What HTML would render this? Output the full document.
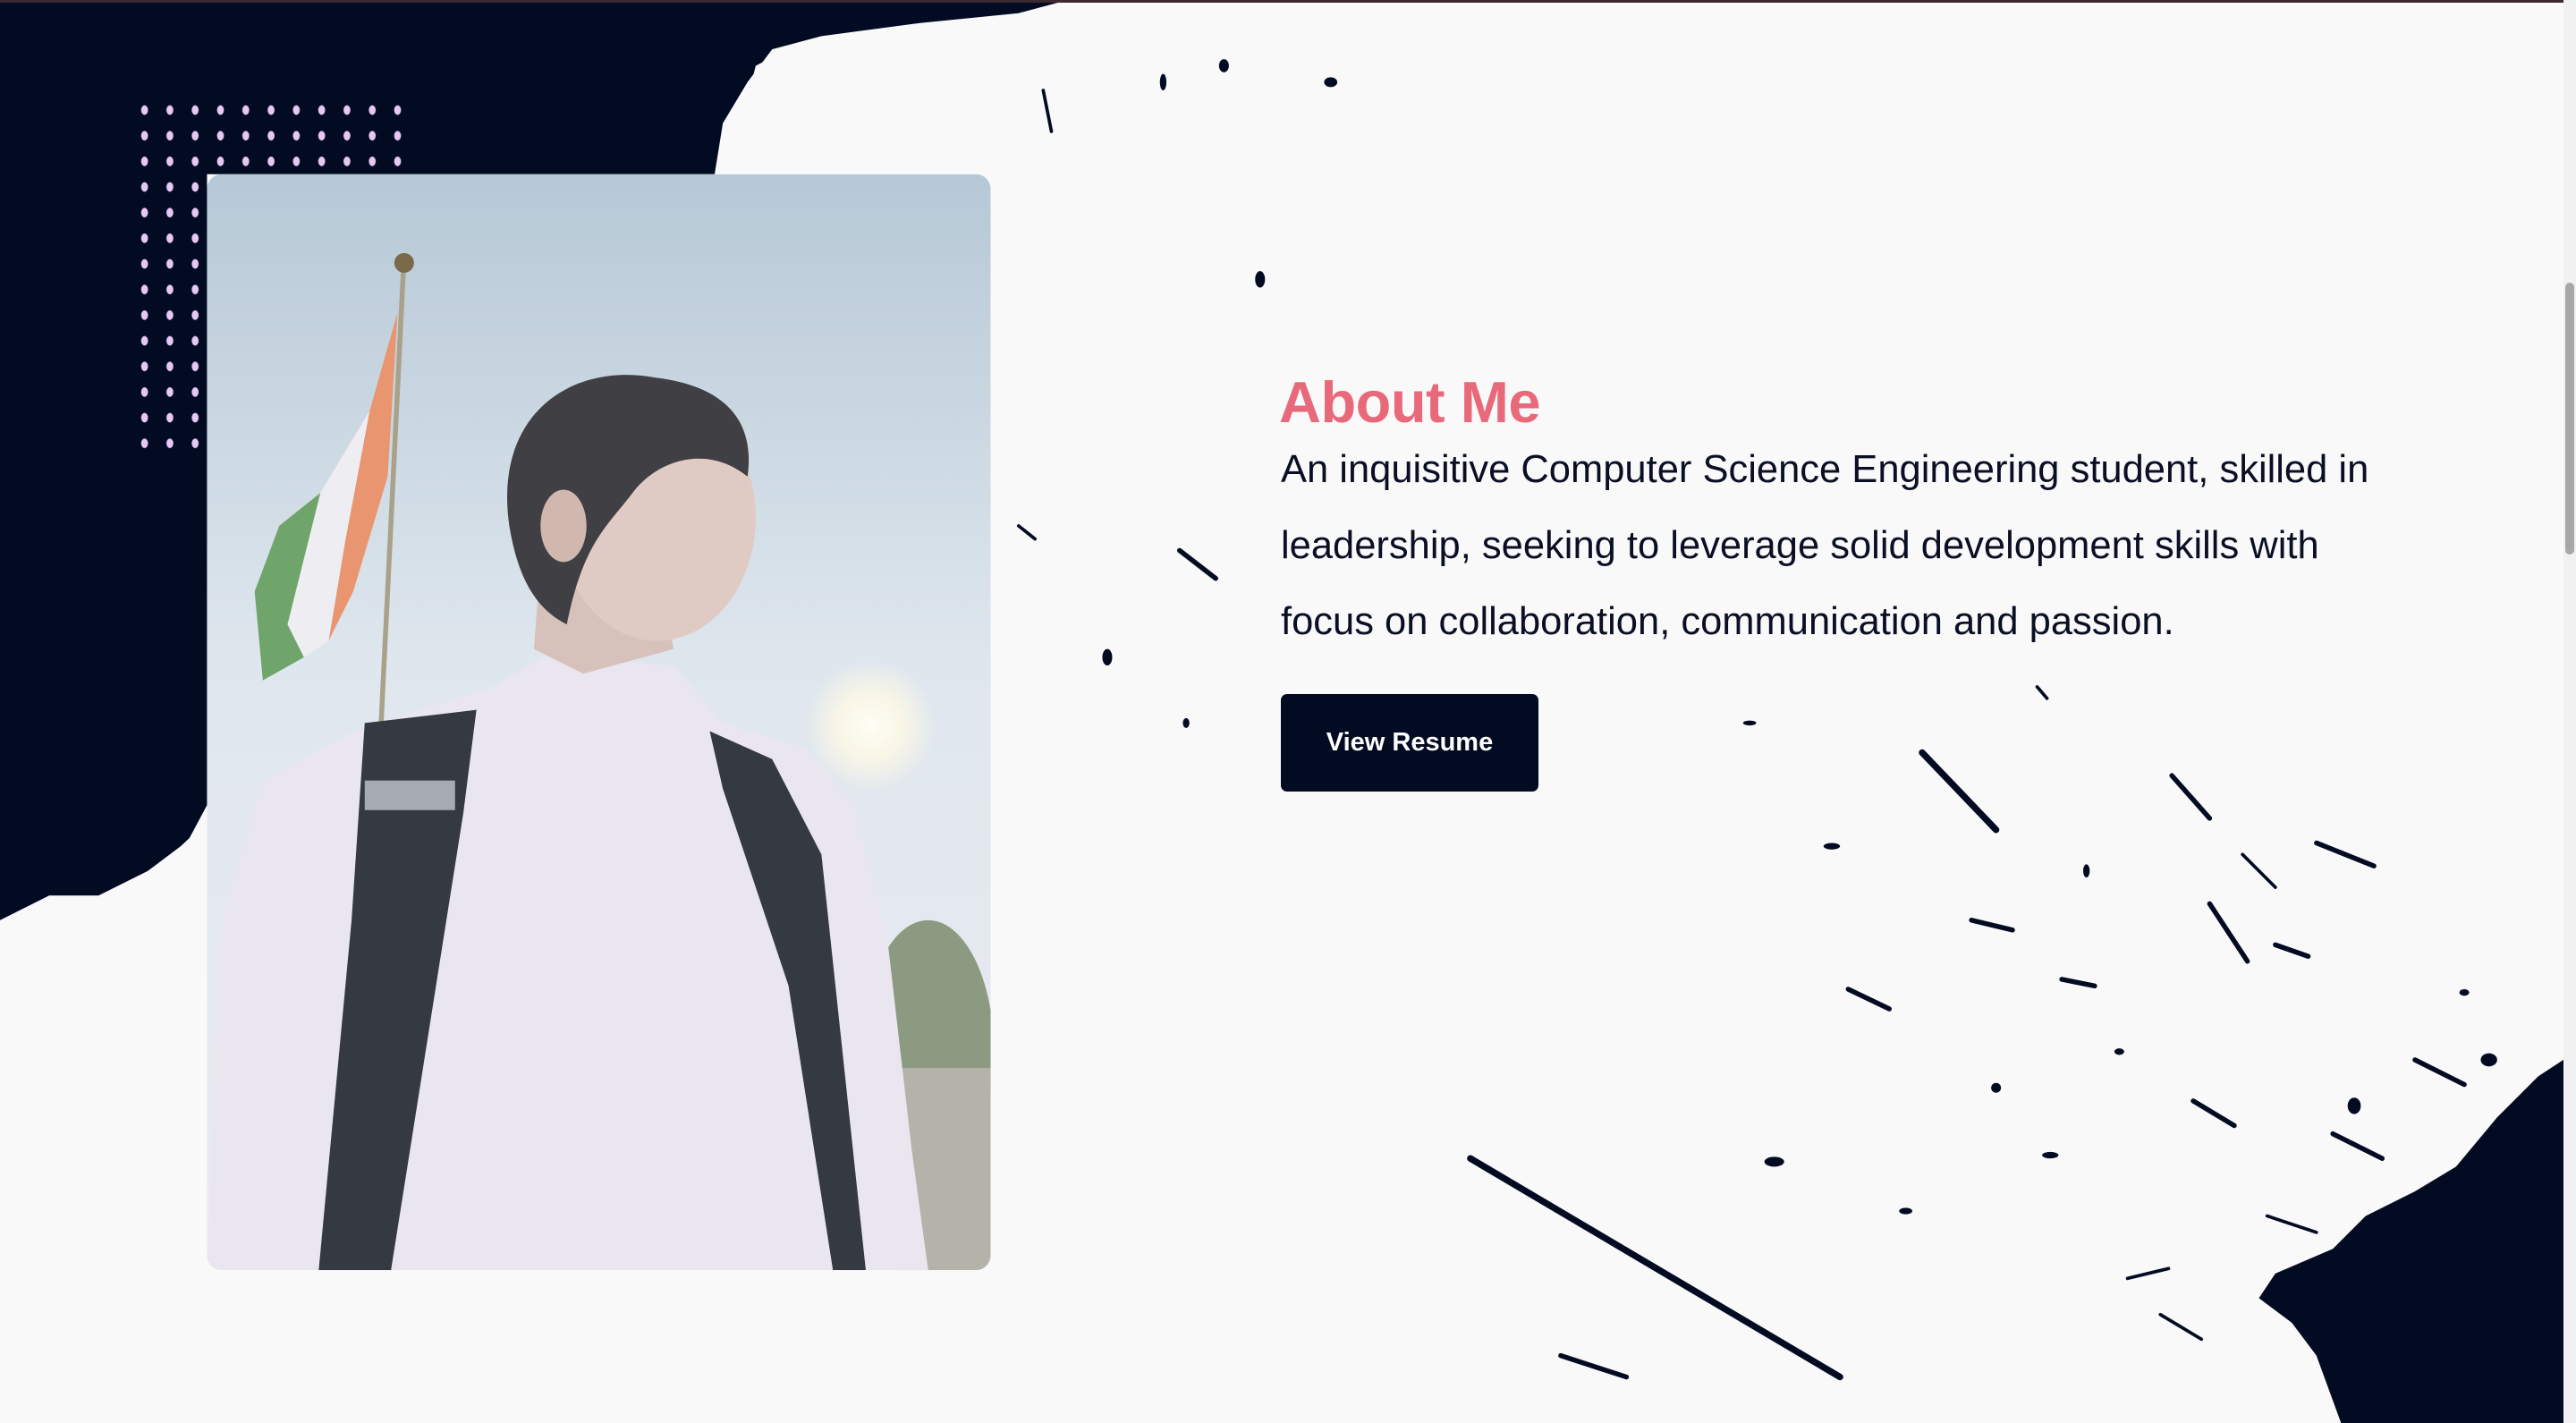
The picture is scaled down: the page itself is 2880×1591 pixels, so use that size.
<!DOCTYPE html>
<html><head><meta charset="utf-8"><style>
html,body{margin:0;padding:0;}
body{width:2880px;height:1591px;overflow:hidden;background:#f9f9fa;position:relative;font-family:"Liberation Sans",sans-serif;}
svg.bg{position:absolute;left:0;top:0;}
.topline{position:absolute;left:0;top:0;width:2880px;height:3px;background:#3a2a30;}
h2{position:absolute;left:1430px;top:412px;margin:0;font-size:65px;font-weight:bold;color:#e8697a;letter-spacing:-0.5px;}
p{position:absolute;left:1432px;top:483px;margin:0;font-size:43.5px;line-height:85px;color:#0a0f24;white-space:nowrap;}
.btn{position:absolute;left:1432px;top:776px;width:288px;height:109px;background:#030b22;border-radius:7px;color:#fff;font-size:29px;font-weight:bold;display:flex;align-items:center;justify-content:center;}
.scroll{position:absolute;left:2866px;top:0;width:14px;height:1591px;background:#f1f1f1;}
.thumb{position:absolute;left:2868px;top:316px;width:10px;height:304px;background:#a8a8a8;border-radius:5px;}
</style></head><body>
<svg class="bg" width="2880" height="1591" viewBox="0 0 1568 866" preserveAspectRatio="none">
<defs>
<pattern id="dots" x="85" y="63" width="15.4" height="15.6" patternUnits="userSpaceOnUse"><ellipse cx="3" cy="4" rx="2.1" ry="2.9" fill="#e7c8f4"/></pattern>
<clipPath id="ph"><rect x="126" y="106" width="477" height="667" rx="9"/></clipPath>
<linearGradient id="sky" x1="0" y1="0" x2="0" y2="1"><stop offset="0" stop-color="#b6c8d6"/><stop offset="0.45" stop-color="#dfe7ee"/><stop offset="1" stop-color="#ebeaf0"/></linearGradient>
<radialGradient id="sun"><stop offset="0" stop-color="#fffef5"/><stop offset="0.5" stop-color="#fbf7e6" stop-opacity="0.9"/><stop offset="1" stop-color="#fbf7e6" stop-opacity="0"/></radialGradient>
</defs>
<polygon fill="#030b22" points="0,0 650,0 620,8 560,14 500,22 470,30 455,50 440,75 435,106 126,106 126,490 110,520 80,540 50,550 20,560 0,560"/>
<g fill="#f9f9fa">
<polygon points="460,40 490,25 520,30 540,20 560,35 600,15 640,5 650,0 700,0 620,106 440,106 450,80"/>
<polygon points="0,560 30,545 60,545 90,530 110,515 126,500 126,620 0,615"/>
</g>
<rect x="85" y="63" width="170" height="210" fill="url(#dots)"/>
<polygon fill="#030b22" points="1568,640 1545,655 1520,680 1495,710 1470,725 1440,740 1420,760 1385,775 1375,790 1395,805 1410,825 1425,866 1568,866"/>
<g stroke="#030b22" stroke-linecap="round" fill="none">
<line x1="895" y1="705" x2="1120" y2="838" stroke-width="4"/>
<line x1="1170" y1="458" x2="1215" y2="505" stroke-width="4"/>
<line x1="1322" y1="472" x2="1345" y2="498" stroke-width="3"/>
<line x1="1410" y1="513" x2="1445" y2="527" stroke-width="3"/>
<line x1="718" y1="335" x2="740" y2="352" stroke-width="3"/>
<line x1="950" y1="825" x2="990" y2="838" stroke-width="3"/>
<line x1="1345" y1="550" x2="1368" y2="585" stroke-width="3"/>
<line x1="1365" y1="520" x2="1385" y2="540" stroke-width="2"/>
<line x1="1125" y1="602" x2="1150" y2="614" stroke-width="3"/>
<line x1="1335" y1="670" x2="1360" y2="685" stroke-width="3"/>
<line x1="1295" y1="778" x2="1320" y2="772" stroke-width="2"/>
<line x1="1470" y1="645" x2="1500" y2="660" stroke-width="3"/>
<line x1="1315" y1="800" x2="1340" y2="815" stroke-width="2"/>
<line x1="635" y1="55" x2="640" y2="80" stroke-width="2"/>
<line x1="620" y1="320" x2="630" y2="328" stroke-width="2"/>
<line x1="1385" y1="575" x2="1405" y2="582" stroke-width="3"/>
<line x1="1240" y1="418" x2="1246" y2="425" stroke-width="2"/>
<line x1="1200" y1="560" x2="1225" y2="566" stroke-width="3"/>
<line x1="1255" y1="596" x2="1275" y2="600" stroke-width="3"/>
<line x1="1420" y1="690" x2="1450" y2="705" stroke-width="3"/>
<line x1="1380" y1="740" x2="1410" y2="750" stroke-width="2"/>
</g>
<g fill="#030b22">
<ellipse cx="767" cy="170" rx="3" ry="5"/><ellipse cx="674" cy="400" rx="3" ry="5"/><ellipse cx="1080" cy="707" rx="6" ry="3"/>
<ellipse cx="1515" cy="645" rx="5" ry="4"/><ellipse cx="1248" cy="703" rx="5" ry="2"/><ellipse cx="1215" cy="662" rx="3" ry="3"/>
<ellipse cx="745" cy="40" rx="3" ry="4"/><ellipse cx="810" cy="50" rx="4" ry="3"/><ellipse cx="1433" cy="673" rx="4" ry="5"/>
<ellipse cx="1500" cy="604" rx="3" ry="2"/><ellipse cx="1115" cy="515" rx="5" ry="2"/><ellipse cx="1065" cy="440" rx="4" ry="1.5"/>
<ellipse cx="1270" cy="530" rx="2" ry="4"/><ellipse cx="1160" cy="737" rx="4" ry="2"/><ellipse cx="1290" cy="640" rx="3" ry="2"/>
<ellipse cx="708" cy="50" rx="2" ry="5"/><ellipse cx="722" cy="440" rx="2" ry="3"/><ellipse cx="1540" cy="700" rx="6" ry="8"/>
</g>
<g clip-path="url(#ph)">
<rect x="126" y="106" width="477" height="667" fill="url(#sky)"/>
<circle cx="530" cy="442" r="40" fill="url(#sun)"/>
<ellipse cx="565" cy="640" rx="40" ry="80" fill="#8c9a82"/>
<rect x="545" y="650" width="58" height="123" fill="#b4b3aa"/>
<line x1="246" y1="155" x2="232" y2="440" stroke="#a9a18a" stroke-width="3"/>
<circle cx="246" cy="160" r="6" fill="#7a6a4a"/>
<polygon points="242,190 236,290 215,360 200,390 210,330 225,250" fill="#e99670"/>
<polygon points="225,250 210,330 200,390 185,400 175,380 195,300" fill="#eeeef2"/>
<polygon points="195,300 175,380 185,400 160,414 155,360 170,320" fill="#6fa46a"/>
<polygon points="126,773 135,560 160,475 215,445 300,418 330,400 410,405 440,440 490,455 520,490 540,570 555,700 565,773" fill="#e9e6ef"/>
<polygon points="222,440 290,432 282,495 238,773 194,773 214,560" fill="#353941"/>
<polygon points="432,445 470,462 500,520 527,773 507,773 480,600 440,480" fill="#353941"/>
<rect x="222" y="475" width="55" height="18" fill="#a6abb2"/>
<polygon points="330,330 400,340 410,395 355,410 325,395" fill="#d6c2ba"/>
<ellipse cx="400" cy="315" rx="60" ry="75" fill="#dfcbc3"/>
<path d="M310,320 C300,250 350,220 400,230 C440,235 460,255 455,290 C430,270 400,280 385,300 C370,320 355,330 345,380 C325,370 315,350 310,320 Z" fill="#403f44"/>
<ellipse cx="343" cy="320" rx="14" ry="22" fill="#d0b8ae"/>
</g>
</svg>
<div class="topline"></div>
<h2>About Me</h2>
<p>An inquisitive Computer Science Engineering student, skilled in<br>leadership, seeking to leverage solid development skills with<br>focus on collaboration, communication and passion.</p>
<div class="btn">View Resume</div>
<div class="scroll"></div><div class="thumb"></div>
</body></html>
